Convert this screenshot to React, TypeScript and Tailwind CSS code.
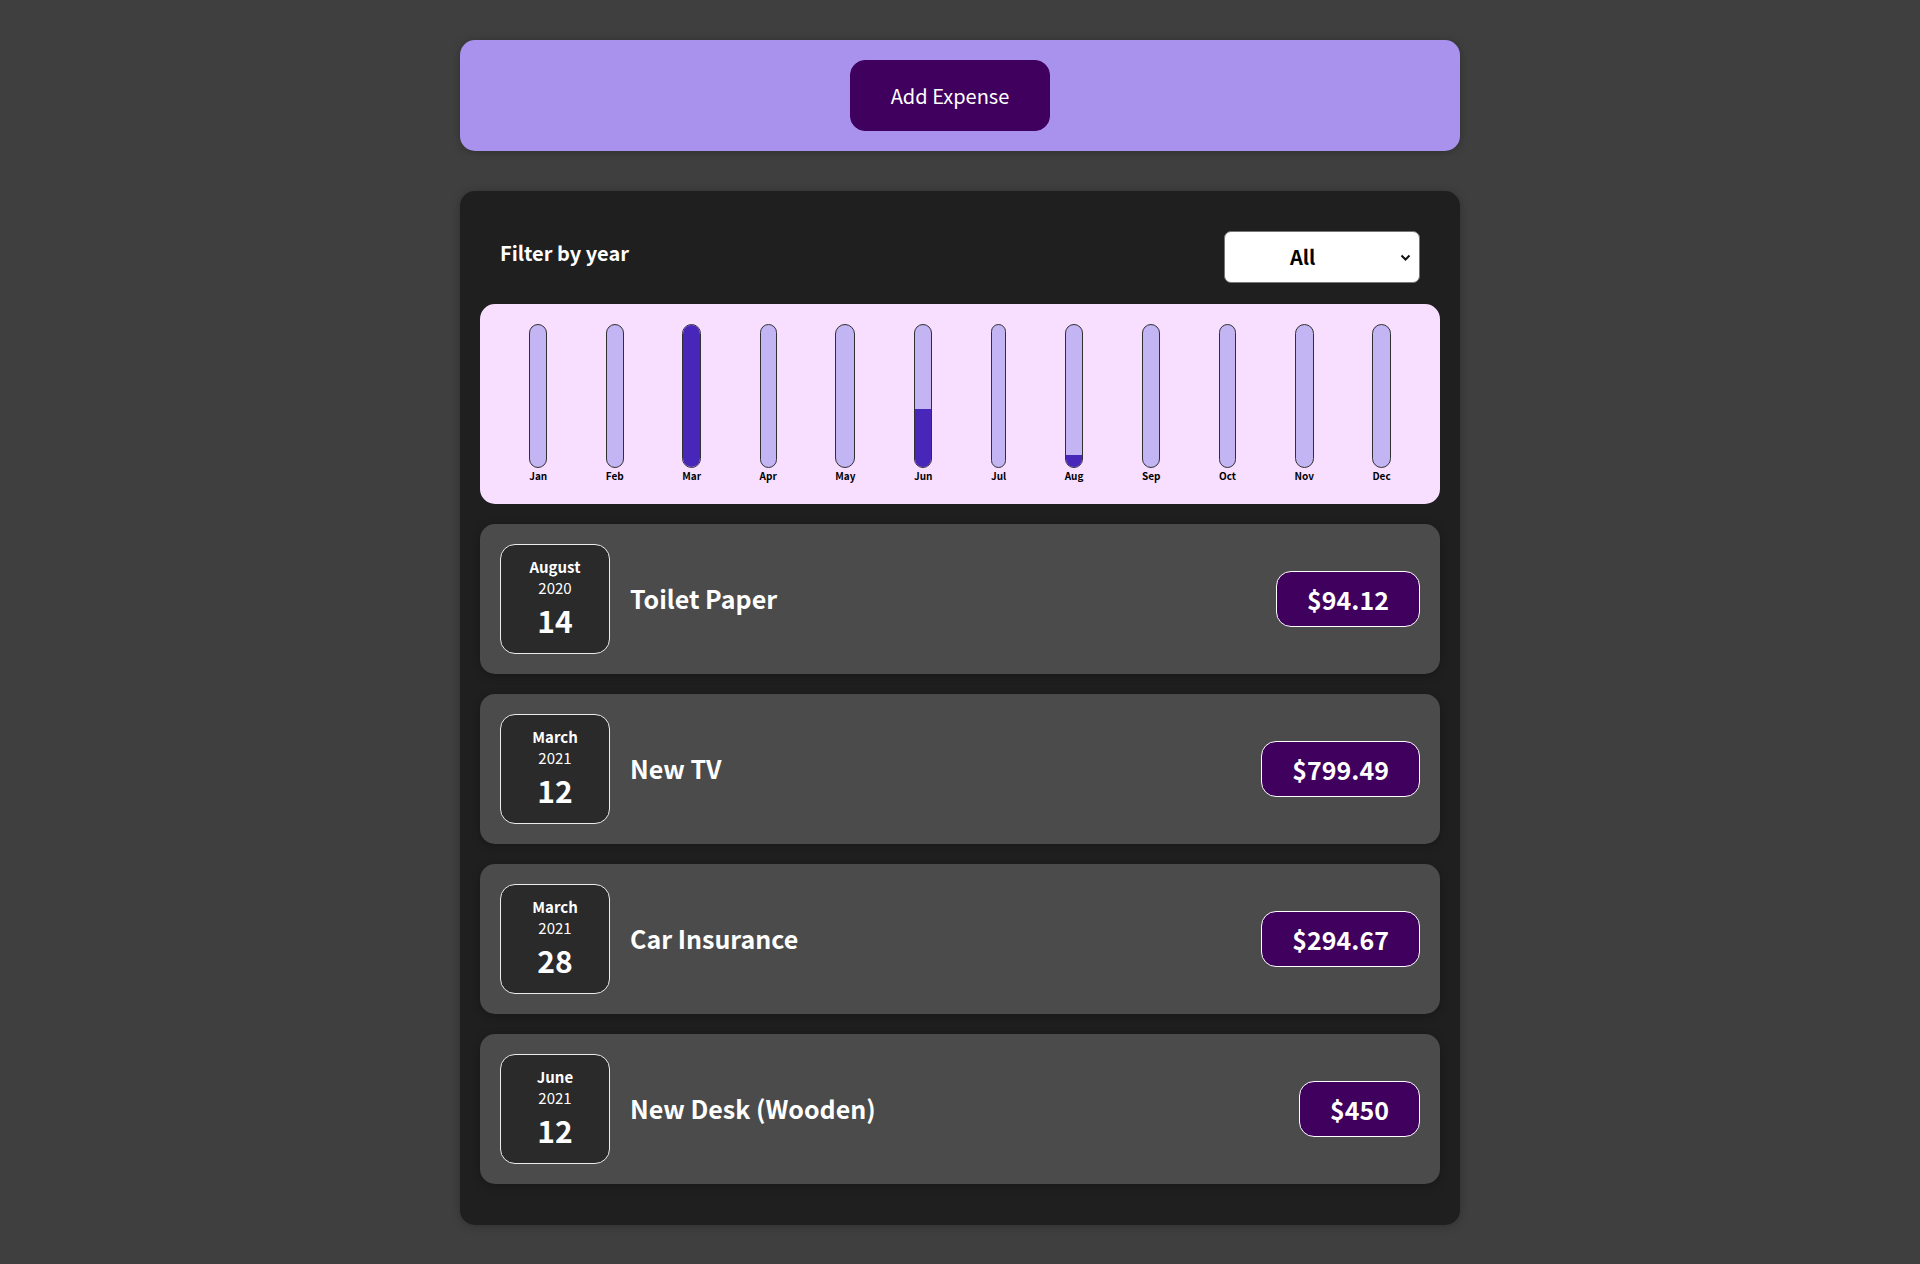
import React from "react";

const FONT = { fontFamily: '"Noto Sans CJK JP", "Noto Sans", sans-serif' };

const months = ["Jan", "Feb", "Mar", "Apr", "May", "Jun", "Jul", "Aug", "Sep", "Oct", "Nov", "Dec"];

const expenses = [
  { month: "August", year: "2020", day: "14", title: "Toilet Paper", price: "$94.12", m: 7, v: 94.12 },
  { month: "March", year: "2021", day: "12", title: "New TV", price: "$799.49", m: 2, v: 799.49 },
  { month: "March", year: "2021", day: "28", title: "Car Insurance", price: "$294.67", m: 2, v: 294.67 },
  { month: "June", year: "2021", day: "12", title: "New Desk (Wooden)", price: "$450", m: 5, v: 450 },
];

export default function App() {
  const totals = months.map((_, i) => expenses.filter((e) => e.m === i).reduce((s, e) => s + e.v, 0));
  const max = Math.max(...totals);

  return (
    <div className="min-h-screen bg-[#3f3f3f] py-[40px]" style={FONT}>
      <div className="mx-auto flex w-[1000px] justify-center rounded-[15px] bg-[#a892ee] p-[20px] shadow-[0_1px_8px_rgba(0,0,0,0.25)]">
        <button className="mr-[20px] rounded-[15px] border border-[#40005d] bg-[#40005d] px-[40px] py-[20px] text-[20px] leading-[29px] text-white">
          Add Expense
        </button>
      </div>

      <div className="mx-auto mt-[40px] w-[1000px] rounded-[15px] bg-[#1f1f1f] p-[20px] shadow-[0_1px_8px_rgba(0,0,0,0.25)]">
        <div className="px-[20px] text-white">
          <div className="mb-[21px] mt-[20px] flex items-center justify-between">
            <span className="mb-[10px] text-[20px] font-bold leading-[29px]">Filter by year</span>
            <div className="relative flex h-[52px] w-[196px] items-center rounded-[7px] border border-[#767676] bg-white pl-[65px] text-[20px] font-bold text-black">
              All
              <svg className="absolute right-[8px] top-[22px]" width="11" height="8" viewBox="0 0 11 8">
                <path d="M1.5 1.5 L5.5 5.5 L9.5 1.5" fill="none" stroke="#111" strokeWidth="2" />
              </svg>
            </div>
          </div>
        </div>

        <div className="flex h-[200px] justify-around rounded-[15px] bg-[#f8dfff] p-[20px]">
          {months.map((mo, i) => (
            <div key={mo} className="flex h-full flex-col items-center">
              <div className="flex w-full flex-1 flex-col justify-end overflow-hidden rounded-[15px] border border-[#313131] bg-[#c3b4f3]">
                <div className="w-full bg-[#4826b9]" style={{ height: `${(totals[i] / max) * 100}%` }} />
              </div>
              <div className="text-center text-[10px] font-bold leading-[16px] text-black">{mo}</div>
            </div>
          ))}
        </div>

        <ul className="mb-[21px] mt-[20px] flex flex-col gap-[20px]">
          {expenses.map((e) => (
            <li
              key={e.title}
              className="flex items-center justify-between rounded-[15px] bg-[#4b4b4b] p-[20px] shadow-[0_2px_8px_rgba(0,0,0,0.25)]"
            >
              <div className="flex flex-1 items-center">
                <div className="flex h-[110px] w-[110px] flex-col items-center justify-center rounded-[15px] border border-[#ececec] bg-[#2a2a2a] text-white">
                  <div className="text-[15px] font-bold leading-[21px]">{e.month}</div>
                  <div className="text-[15px] leading-[21px]">{e.year}</div>
                  <div className="text-[30px] font-bold leading-[44px]">{e.day}</div>
                </div>
                <h2 className="mx-[20px] flex-1 text-[25px] font-bold text-white">{e.title}</h2>
              </div>
              <div className="rounded-[15px] border border-white bg-[#40005d] px-[30px] py-[10px] text-[25px] font-bold leading-[34px] text-white">
                {e.price}
              </div>
            </li>
          ))}
        </ul>
      </div>
    </div>
  );
}
